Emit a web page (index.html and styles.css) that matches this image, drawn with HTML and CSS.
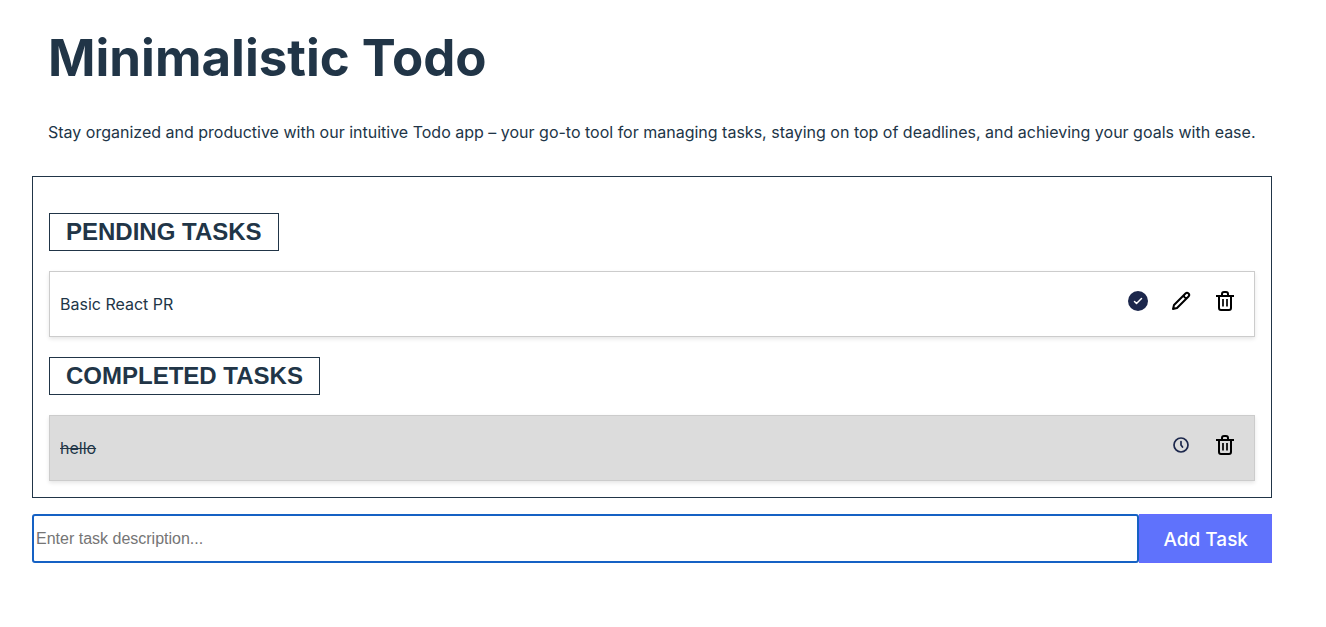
FILE: index.html
```
<!DOCTYPE html>
<html lang="en">
<head>
<meta charset="utf-8">
<title>Minimalistic Todo</title>
<link rel="stylesheet" href="styles.css">
</head>
<body>
<main class="app">
  <header class="intro">
    <h1 class="title">Minimalistic Todo</h1>
    <p class="tagline">Stay organized and productive with our intuitive Todo app – your go-to tool for managing tasks, staying on top of deadlines, and achieving your goals with ease.</p>
  </header>
  <section class="board">
    <h2 class="label">PENDING TASKS</h2>
    <ul class="list">
      <li class="task">
        <span class="text">Basic React PR</span>
        <span class="actions">
          <button class="icon" type="button" aria-label="Complete"><svg viewBox="0 0 24 24"><circle cx="13" cy="12" r="10" fill="#1c274c"/><path d="M9.5 12.5l2 2 5-5" fill="none" stroke="#fff" stroke-width="1.5" stroke-linecap="round" stroke-linejoin="round"/></svg></button>
          <button class="icon" type="button" aria-label="Edit"><svg viewBox="0 0 24 24" fill="none" stroke="#000" stroke-width="2" stroke-linejoin="round"><path d="M4 20l1-4L16.500 4.500a2 2 0 0 1 3 3L8 19zM15 6a2.500 2.500 0 0 0 3 3"/></svg></button>
          <button class="icon" type="button" aria-label="Delete"><svg viewBox="0 0 24 24" fill="none" stroke="#000" stroke-width="2" stroke-linejoin="round"><path d="M3 7h18M6 7v12a2 2 0 0 0 2 2h8a2 2 0 0 0 2-2V7M9 7V5a2 2 0 0 1 2-2h2a2 2 0 0 1 2 2v2"/><path d="M10 10v7.500M14 10v7.500" stroke-width="1.700"/></svg></button>
        </span>
      </li>
    </ul>
    <h2 class="label">COMPLETED TASKS</h2>
    <ul class="list">
      <li class="task done">
        <span class="text">hello</span>
        <span class="actions">
          <button class="icon" type="button" aria-label="Mark as pending"><svg viewBox="0 0 24 24" fill="none" stroke="#1c274c" stroke-width="1.700" stroke-linecap="round" stroke-linejoin="round"><circle cx="12" cy="12" r="7"/><path d="M12 8.500v3.500l1.500 2"/></svg></button>
          <button class="icon" type="button" aria-label="Delete"><svg viewBox="0 0 24 24" fill="none" stroke="#000" stroke-width="2" stroke-linejoin="round"><path d="M3 7h18M6 7v12a2 2 0 0 0 2 2h8a2 2 0 0 0 2-2V7M9 7V5a2 2 0 0 1 2-2h2a2 2 0 0 1 2 2v2"/><path d="M10 10v7.500M14 10v7.500" stroke-width="1.700"/></svg></button>
        </span>
      </li>
    </ul>
  </section>
  <form class="entry">
    <input class="field" type="text" aria-label="Task description" placeholder="Enter task description...">
    <button class="add" type="submit">Add Task</button>
  </form>
</main>
</body>
</html>
```
FILE: styles.css
```
* { box-sizing: border-box; }
body { margin: 0; background: #fff; color: #213547; font: 16px/24px Inter, sans-serif; }
.app { padding: 24px 54px 32px 32px; }
.intro { padding: 0 16px; }
.title { margin: 0; font-size: 51px; line-height: 68px; font-weight: 700; }
.tagline { margin: 28px 0 32px; }
.board { border: 1px solid #213547; padding: 36px 16px 16px; }
.label { width: fit-content; margin: 0 0 20px; padding: 0 16px; border: 1px solid #213547; font: bold 24px/36px "Liberation Sans", Arial, sans-serif; }
.list { list-style: none; margin: 0; padding: 0; }
.list + .label { margin-top: 20px; }
.task { display: flex; align-items: center; justify-content: space-between; height: 66px; padding: 0 17px 0 10px; border: 1px solid #ccc; box-shadow: 0 2px 4px rgba(0,0,0,.1); }
.done { background: #dcdcdc; }
.done .text { text-decoration: line-through; }
.actions { display: flex; gap: 20px; padding-bottom: 6px; }
.icon { padding: 0; border: 0; background: none; }
.icon svg { display: block; width: 24px; height: 24px; }
.entry { display: flex; margin-top: 16px; }
.field { flex: 1; min-width: 0; height: 49px; padding: 1px 2px; border: 2px solid #1561c4; border-radius: 3px; outline: 0; font: 16px "Liberation Sans", Arial, sans-serif; }
.field::placeholder { color: #757575; }
.add { padding: 2px 23px 0; border: 1px solid #646cff; background: #5f72fc; color: #fff; font: 500 19px/28px Inter, sans-serif; }
```
